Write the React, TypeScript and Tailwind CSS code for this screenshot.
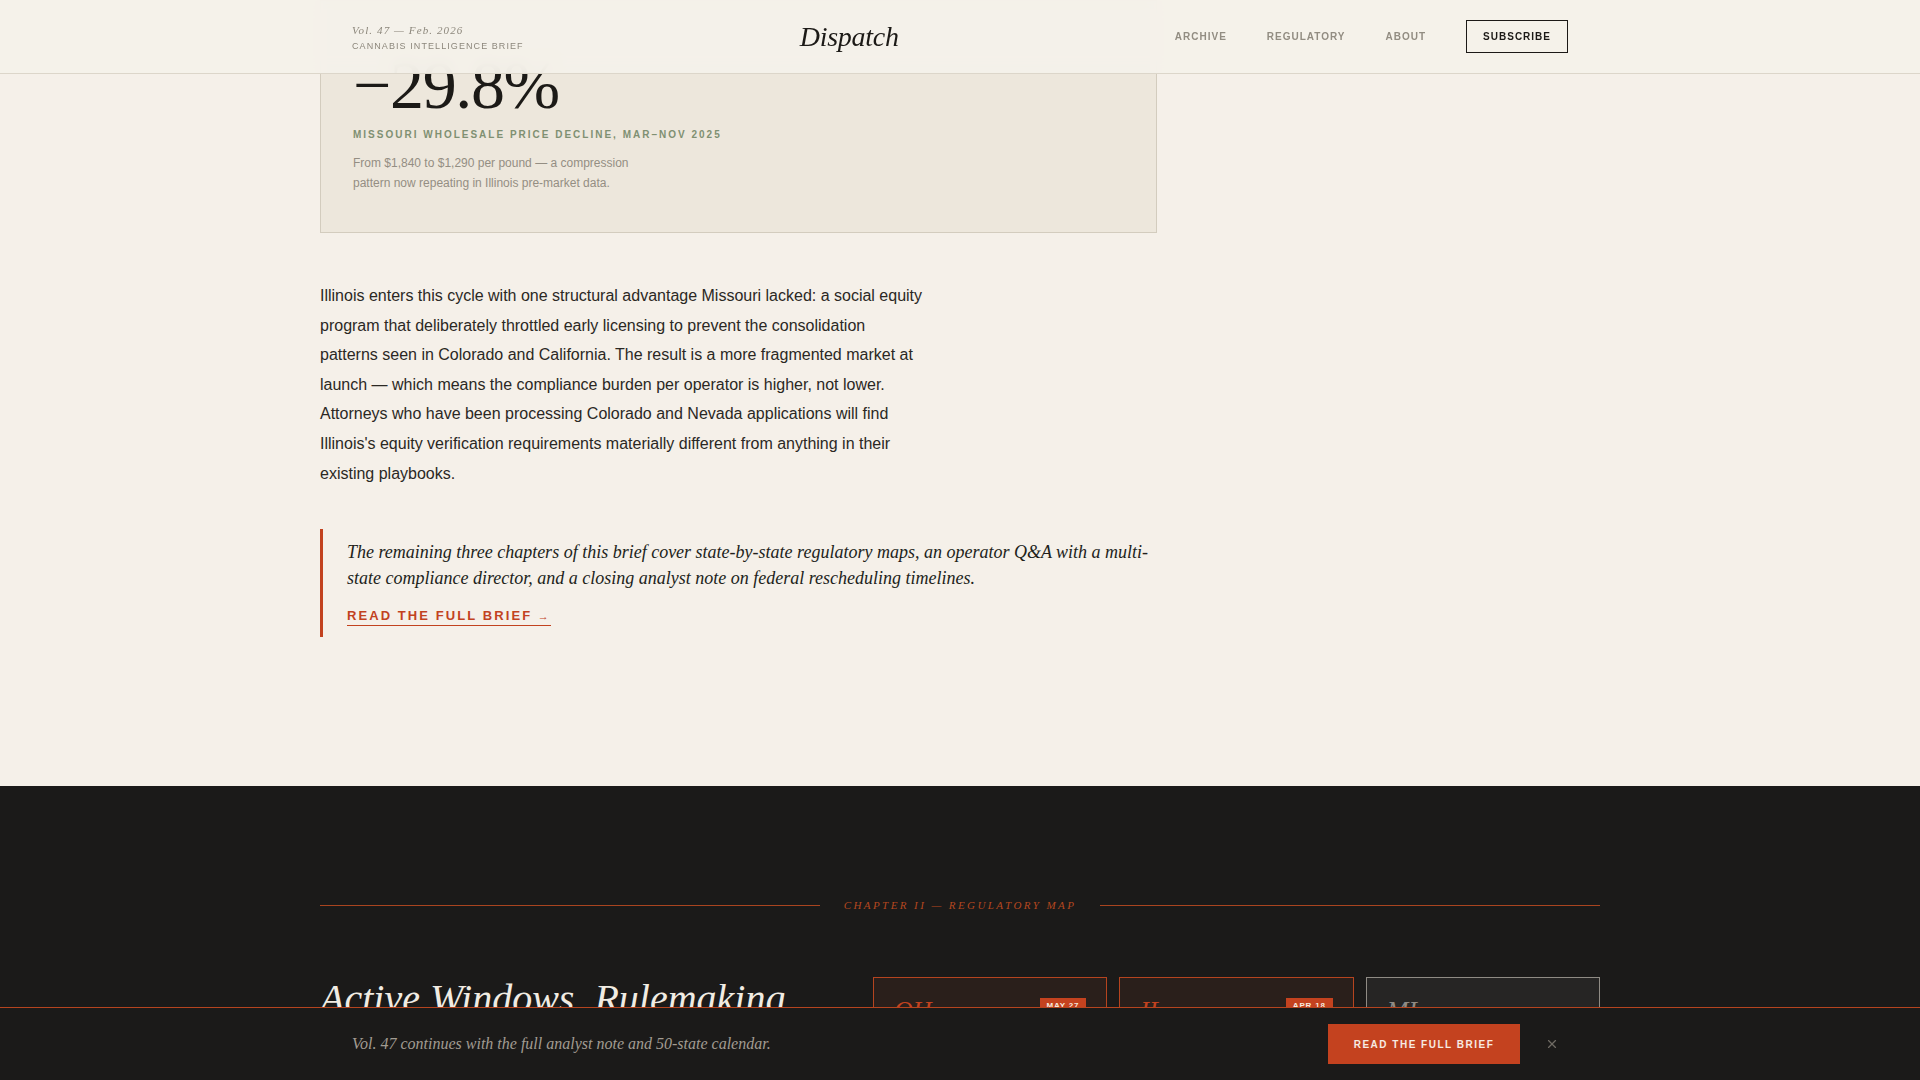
import React from "react";
import { X } from "lucide-react";

const serif = "font-['Liberation_Serif','Times_New_Roman',serif]";

const windows = [
    { state: "OH", date: "MAY 27", active: true, note: "Adult-use rulemaking comment window" },
    { state: "IL", date: "APR 18", active: true, note: "Social equity verification update" },
    { state: "MI", date: "", active: false, note: "No open window this quarter" },
];

function Header() {
    return (
        <header className="fixed inset-x-0 top-0 z-40 h-[74px] border-b border-[#dcd6ca] bg-[#f4f1ea]/[0.95] backdrop-blur-sm">
            <div className="mx-auto flex h-full max-w-[1280px] items-center justify-between px-8">
                <div>
                    <div className={`${serif} text-[11px] italic leading-4 tracking-[0.1em] text-[#8c877c]`}>
                        Vol. 47 — Feb. 2026
                    </div>
                    <div className="mt-[2px] text-[9px] leading-3 tracking-[0.12em] text-[#8c877c]">
                        CANNABIS INTELLIGENCE BRIEF
                    </div>
                </div>
                <div className={`${serif} text-[28px] italic leading-none tracking-[-0.01em] text-[#1c1a17]`}>
                    Dispatch
                </div>
                <nav className="flex items-center gap-10 text-[10px] font-bold tracking-[0.1em]">
                    <a className="text-[#928d82]">ARCHIVE</a>
                    <a className="text-[#928d82]">REGULATORY</a>
                    <a className="text-[#928d82]">ABOUT</a>
                    <button className="h-[33px] border border-[#1c1a17] px-4 text-[10px] font-bold tracking-[0.1em] text-[#1c1a17]">
                        SUBSCRIBE
                    </button>
                </nav>
            </div>
        </header>
    );
}

function StatCard() {
    return (
        <div className="border border-[#d3ccbe] bg-[#ede7dc] px-8 pb-[39px] pt-[50px]">
            <div className={`${serif} text-[68px] leading-none tracking-[-0.02em] text-[#1c1a17]`}>
                −29.8%
            </div>
            <div className="mt-[9px] text-[10px] font-bold leading-[14px] tracking-[0.2em] text-[#7f9072]">
                MISSOURI WHOLESALE PRICE DECLINE, MAR–NOV 2025
            </div>
            <p className="mt-[11px] max-w-[300px] text-[12px] leading-5 text-[#948e83]">
                From $1,840 to $1,290 per pound — a compression pattern now repeating in Illinois pre-market data.
            </p>
        </div>
    );
}

function RegulatoryMap() {
    return (
        <section className="bg-[#1b1a19] pb-40 pt-[111px]">
            <div className="mx-auto max-w-[1280px]">
                <div className="flex items-center gap-6">
                    <div className="h-px flex-1 bg-[#a9441f]" />
                    <div className={`${serif} text-[11px] italic leading-4 tracking-[0.22em] text-[#b4471f]`}>
                        CHAPTER II — REGULATORY MAP
                    </div>
                    <div className="h-px flex-1 bg-[#a9441f]" />
                </div>

                <div className="mt-16 flex gap-[52px]">
                    <h2 className={`${serif} flex-1 text-[40px] italic leading-[44px] text-[#f1ece3]`}>
                        Active Windows, Rulemaking Deadlines
                    </h2>
                    <div className="grid w-[727px] grid-cols-3 gap-3">
                        {windows.map((w) => (
                            <div
                                key={w.state}
                                className={
                                    w.active
                                        ? "h-[150px] border border-[#b5441f] bg-[#2a1f1b] p-5"
                                        : "h-[150px] border border-[#8f8b84] bg-[#262524] p-5"
                                }
                            >
                                <div className="flex items-start justify-between">
                                    <span
                                        className={`${serif} text-[26px] italic leading-none ${
                                            w.active ? "text-[#c2421f]" : "text-[#8f8b84]"
                                        }`}
                                    >
                                        {w.state}
                                    </span>
                                    {w.date && (
                                        <span className="bg-[#c4421f] px-[7px] py-[3px] text-[8px] font-bold leading-[10px] tracking-[0.1em] text-[#f6e9df]">
                                            {w.date}
                                        </span>
                                    )}
                                </div>
                                <p className="mt-6 text-[12px] leading-5 text-[#a19b91]">{w.note}</p>
                            </div>
                        ))}
                    </div>
                </div>
            </div>
        </section>
    );
}

function ContinueBar() {
    return (
        <div className="fixed inset-x-0 bottom-0 z-40 h-[73px] border-t border-[#b5441f] bg-[#1b1a19]">
            <div className="mx-auto flex h-full max-w-[1280px] items-center justify-between px-8">
                <p className={`${serif} text-[16px] italic text-[#a29c92]`}>
                    Vol. 47 continues with the full analyst note and 50-state calendar.
                </p>
                <div className="flex items-center gap-4">
                    <button className="h-10 w-[192px] bg-[#c4421f] text-[10px] font-bold tracking-[0.15em] text-[#f7ebe2]">
                        READ THE FULL BRIEF
                    </button>
                    <button className="flex h-8 w-8 items-center justify-center text-[#6f6a63]">
                        <X className="h-[14px] w-[14px]" strokeWidth={2} />
                    </button>
                </div>
            </div>
        </div>
    );
}

export default function App() {
    return (
        <div className="min-h-screen bg-[#f5f0e9] font-['Liberation_Sans',Arial,sans-serif]">
            <Header />

            <main className="mx-auto max-w-[1280px] pb-[149px]">
                <div className="w-[837px]">
                    <StatCard />

                    <p className="mt-12 max-w-[604px] text-[16px] leading-[29.6px] text-[#2b2824]">
                        Illinois enters this cycle with one structural advantage Missouri lacked: a social equity
                        program that deliberately throttled early licensing to prevent the consolidation patterns
                        seen in Colorado and California. The result is a more fragmented market at launch — which
                        means the compliance burden per operator is higher, not lower. Attorneys who have been
                        processing Colorado and Nevada applications will find Illinois's equity verification
                        requirements materially different from anything in their existing playbooks.
                    </p>

                    <blockquote className="mt-[41px] border-l-[3px] border-[#c2421f] pb-[10px] pl-6 pt-[10px]">
                        <p className={`${serif} text-[18px] italic leading-[26px] text-[#221f1b]`}>
                            The remaining three chapters of this brief cover state-by-state regulatory maps, an
                            operator Q&amp;A with a multi-state compliance director, and a closing analyst note on
                            federal rescheduling timelines.
                        </p>
                        <a className="mt-[17px] inline-block border-b-[1.5px] border-[#c2421f] pb-[1px] text-[13px] font-bold leading-4 tracking-[0.16em] text-[#c2421f]">
                            READ THE FULL BRIEF <span className="text-[11px]">→</span>
                        </a>
                    </blockquote>
                </div>
            </main>

            <RegulatoryMap />
            <ContinueBar />
        </div>
    );
}
